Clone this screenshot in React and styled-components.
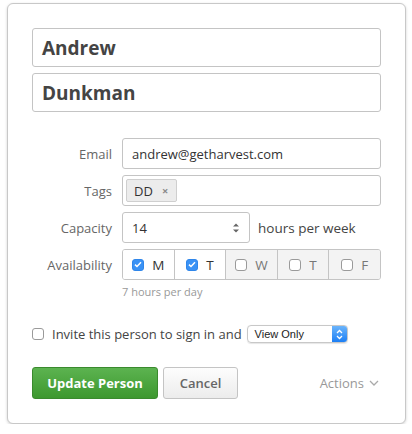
import React from "react";
import styled, { createGlobalStyle } from "styled-components";

const GlobalStyle = createGlobalStyle`
  html, body {
    margin: 0;
    padding: 0;
    background: #fff;
  }
  body {
    font-family: "Open Sans", "Liberation Sans", sans-serif;
    color: #333;
  }
`;

const Page = styled.div`
  padding: 3px 6px 0 7px;
  width: 412px;
  box-sizing: border-box;
`;

const Card = styled.div`
  width: 399px;
  box-sizing: border-box;
  border: 1px solid #c8c8c8;
  border-radius: 6px;
  box-shadow: 0 1px 3px rgba(0, 0, 0, 0.18);
  padding: 24px;
  background: #fff;
`;

const NameInput = styled.div`
  height: 39px;
  box-sizing: border-box;
  border: 1px solid #c4c4c4;
  border-radius: 3px;
  padding: 0 9px;
  display: flex;
  align-items: center;
  font-size: 19px;
  font-weight: 700;
  color: #444;
  & + & {
    margin-top: 6px;
  }
`;

const Fields = styled.div`
  margin-top: 26px;
  display: flex;
  flex-direction: column;
  gap: 6px;
`;

const Row = styled.div`
  display: flex;
  align-items: center;
  gap: 10px;
`;

const Label = styled.div`
  width: 80px;
  text-align: right;
  font-size: 13px;
  color: #666;
`;

const Input = styled.div`
  flex: ${(p) => (p.$width ? "none" : 1)};
  width: ${(p) => (p.$width ? `${p.$width}px` : "auto")};
  height: 31px;
  box-sizing: border-box;
  border: 1px solid #c4c4c4;
  border-radius: 3px;
  padding: 0 9px;
  display: flex;
  align-items: center;
  font-size: 13px;
  color: #333;
  position: relative;
`;

const TagInput = styled(Input)`
  padding: 0 3px;
`;

const Tag = styled.span`
  display: inline-flex;
  align-items: center;
  gap: 9px;
  height: 23px;
  box-sizing: border-box;
  padding: 0 8px 0 7px;
  background: #ececec;
  border: 1px solid #cfcfcf;
  border-radius: 2px;
  font-size: 13px;
  color: #333;
`;

const TagX = styled.span`
  font-size: 11px;
  color: #888;
  font-weight: 700;
`;

const Stepper = styled.svg`
  position: absolute;
  right: 9px;
  top: 50%;
  transform: translateY(-50%);
`;

const Suffix = styled.span`
  font-size: 13.5px;
  color: #444;
  margin-left: -2px;
`;

const Days = styled.div`
  flex: 1;
  height: 31px;
  box-sizing: border-box;
  border: 1px solid #c4c4c4;
  border-radius: 3px;
  display: flex;
  overflow: hidden;
`;

const Day = styled.div`
  flex: 1;
  display: flex;
  align-items: center;
  justify-content: center;
  gap: 8px;
  font-size: 13.5px;
  color: ${(p) => (p.$on ? "#333" : "#777")};
  background: ${(p) => (p.$on ? "#fff" : "#f3f3f3")};
  & + & {
    border-left: 1px solid #c4c4c4;
  }
`;

const Box = styled.span`
  width: 12px;
  height: 12px;
  box-sizing: border-box;
  border-radius: 3px;
  display: inline-flex;
  align-items: center;
  justify-content: center;
  flex: none;
  background: ${(p) => (p.$on ? "#3a92f5" : "#fff")};
  border: 1px solid ${(p) => (p.$on ? "#2f86ea" : "#9a9a9a")};
`;

const Hint = styled.div`
  margin: 4px 0 0 90px;
  font-size: 11px;
  color: #999;
`;

const InviteRow = styled.div`
  margin-top: 26px;
  display: flex;
  align-items: center;
  gap: 8px;
  font-size: 13px;
  color: #444;
`;

const Select = styled.div`
  margin-left: -3px;
  width: 101px;
  height: 18px;
  box-sizing: border-box;
  border: 1px solid #c8c8c8;
  border-radius: 4px;
  display: flex;
  align-items: stretch;
  overflow: hidden;
  box-shadow: 0 0.5px 1px rgba(0, 0, 0, 0.1);
`;

const SelectText = styled.span`
  flex: 1;
  padding-left: 7px;
  font-size: 11px;
  color: #222;
  display: flex;
  align-items: center;
  font-family: "Liberation Sans", sans-serif;
`;

const SelectArrow = styled.span`
  width: 15px;
  background: linear-gradient(#6ab4fb, #1c7ff5);
  display: flex;
  align-items: center;
  justify-content: center;
`;

const Actions = styled.div`
  margin-top: 24px;
  display: flex;
  align-items: center;
  gap: 5px;
`;

const Button = styled.button`
  height: 32px;
  width: ${(p) => (p.$primary ? 126 : 75)}px;
  box-sizing: border-box;
  padding: 0;
  font-family: inherit;
  font-size: 13px;
  font-weight: ${(p) => (p.$primary ? 700 : 600)};
  border-radius: 3px;
  color: ${(p) => (p.$primary ? "#fff" : "#666")};
  border: 1px solid ${(p) => (p.$primary ? "#3a8a2d" : "#c4c4c4")};
  background: ${(p) =>
    p.$primary
      ? "linear-gradient(#5cb350, #3d982f)"
      : "linear-gradient(#fdfdfd, #ececec)"};
  cursor: pointer;
`;

const ActionsMenu = styled.div`
  margin-left: auto;
  margin-right: 2px;
  display: flex;
  align-items: center;
  gap: 5px;
  font-size: 13px;
  color: #999;
`;

const Check = () => (
  <svg width="8" height="7" viewBox="0 0 8 7">
    <path d="M1 3.6 L3 5.5 L7 1.2" fill="none" stroke="#fff" strokeWidth="1.5" />
  </svg>
);

const days = [
  { d: "M", on: true },
  { d: "T", on: true },
  { d: "W", on: false },
  { d: "T", on: false },
  { d: "F", on: false },
];

export default function App() {
  return (
    <Page>
      <GlobalStyle />
      <Card>
        <NameInput>Andrew</NameInput>
        <NameInput>Dunkman</NameInput>

        <Fields>
          <Row>
            <Label>Email</Label>
            <Input>andrew@getharvest.com</Input>
          </Row>
          <Row>
            <Label>Tags</Label>
            <TagInput>
              <Tag>
                DD <TagX>×</TagX>
              </Tag>
            </TagInput>
          </Row>
          <Row>
            <Label>Capacity</Label>
            <Input $width={128}>
              14
              <Stepper width="8" height="12" viewBox="0 0 8 12">
                <path d="M1 4.5 L4 1.5 L7 4.5 Z M1 7.5 L4 10.5 L7 7.5 Z" fill="#666" />
              </Stepper>
            </Input>
            <Suffix>hours per week</Suffix>
          </Row>
          <Row>
            <Label>Availability</Label>
            <Days>
              {days.map((x, i) => (
                <Day key={i} $on={x.on}>
                  <Box $on={x.on}>{x.on && <Check />}</Box>
                  {x.d}
                </Day>
              ))}
            </Days>
          </Row>
        </Fields>
        <Hint>7 hours per day</Hint>

        <InviteRow>
          <Box />
          <span>Invite this person to sign in and</span>
          <Select>
            <SelectText>View Only</SelectText>
            <SelectArrow>
              <svg width="7" height="11" viewBox="0 0 7 11">
                <path d="M1 4 L3.5 1.5 L6 4 M1 7 L3.5 9.5 L6 7" fill="none" stroke="#fff" strokeWidth="1.3" />
              </svg>
            </SelectArrow>
          </Select>
        </InviteRow>

        <Actions>
          <Button $primary>Update Person</Button>
          <Button>Cancel</Button>
          <ActionsMenu>
            Actions
            <svg width="10" height="6" viewBox="0 0 10 6">
              <path d="M1 1 L5 5 L9 1" fill="none" stroke="#aaa" strokeWidth="1.3" />
            </svg>
          </ActionsMenu>
        </Actions>
      </Card>
    </Page>
  );
}
